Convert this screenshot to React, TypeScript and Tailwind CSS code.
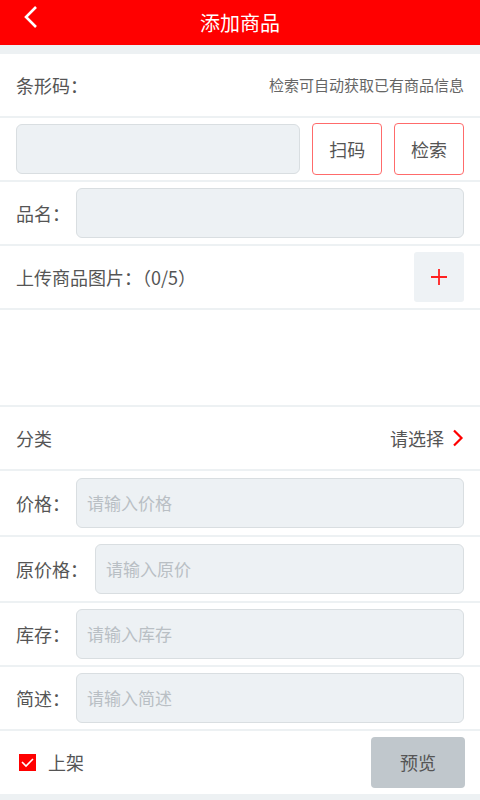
import React from 'react'

const font = { fontFamily: '"Noto Sans CJK SC", "Noto Sans", sans-serif' }

const Field = ({ label, placeholder, labelW = 'w-[60px]', h = 'h-[64px]' }: { label: string; placeholder?: string; labelW?: string; h?: string }) => (
  <div className={`flex items-center ${h} px-4 border-b-2 border-[#edf1f3]`}>
    <span className={`${labelW} shrink-0 text-[18px] text-[#555]`}>{label}</span>
    <div className="flex-1 h-[50px] rounded-[6px] bg-[#edf1f4] border border-[#d9dee1] flex items-center px-[10px] text-[17px] text-[#b9bfc4]">
      {placeholder}
    </div>
  </div>
)

const App = () => {
  return (
    <div style={font} className="w-[480px] h-[800px] bg-[#edf1f3] overflow-hidden">
      <div className="relative h-[45px] bg-[#ff0000] flex items-center justify-center">
        <svg className="absolute left-[22px] top-[5px]" width="18" height="24" viewBox="0 0 18 24">
          <path d="M14 2 L4 12 L14 22" stroke="#fff" strokeWidth="2.6" fill="none" />
        </svg>
        <span className="text-white text-[20px]">添加商品</span>
      </div>
      <div className="h-[9px]" />
      <div className="bg-white">
        <div className="flex items-center justify-between h-[64px] px-4 border-b-2 border-[#edf1f3]">
          <span className="text-[18px] text-[#555]">条形码：</span>
          <span className="text-[15px] text-[#666]">检索可自动获取已有商品信息</span>
        </div>
        <div className="flex items-center h-[64px] px-4 gap-3 border-b-2 border-[#edf1f3]">
          <div className="w-[285px] h-[50px] rounded-[6px] bg-[#edf1f4] border border-[#d9dee1]" />
          <button className="w-[70px] h-[52px] rounded-[4px] border border-[#ff6b6b] bg-white text-[18px] text-[#555]">扫码</button>
          <button className="w-[70px] h-[52px] rounded-[4px] border border-[#ff6b6b] bg-white text-[18px] text-[#555]">检索</button>
        </div>
        <Field label="品名：" />
        <div className="flex items-center justify-between h-[64px] px-4 border-b-2 border-[#edf1f3]">
          <span className="text-[18px] text-[#555]">上传商品图片：（0/5）</span>
          <div className="w-[50px] h-[50px] rounded-[3px] bg-[#eef2f5] flex items-center justify-center">
            <svg width="16" height="16" viewBox="0 0 16 16">
              <path d="M8 0 V16 M0 8 H16" stroke="#ff2020" strokeWidth="1.8" />
            </svg>
          </div>
        </div>
        <div className="h-[97px] border-b-2 border-[#edf1f3]" />
        <div className="flex items-center justify-between h-[64px] px-4 border-b-2 border-[#edf1f3]">
          <span className="text-[18px] text-[#555]">分类</span>
          <div className="flex items-center gap-[8px]">
            <span className="text-[18px] text-[#555]">请选择</span>
            <svg width="12" height="18" viewBox="0 0 12 18">
              <path d="M2 1.5 L9.5 9 L2 16.5" stroke="#ff0000" strokeWidth="2.2" fill="none" />
            </svg>
          </div>
        </div>
        <Field label="价格：" placeholder="请输入价格" h="h-[66px]" />
        <Field label="原价格：" placeholder="请输入原价" labelW="w-[79px]" h="h-[66px]" />
        <Field label="库存：" placeholder="请输入库存" />
        <Field label="简述：" placeholder="请输入简述" />
        <div className="flex items-center justify-between h-[65px] pl-[19px] pr-[15px] border-b-2 border-[#edf1f3]">
          <div className="flex items-center gap-[12px]">
            <div className="w-[17px] h-[17px] bg-[#ff0000] flex items-center justify-center">
              <svg width="13" height="10" viewBox="0 0 13 10">
                <path d="M1 4 L5 8 L12 1" stroke="#fff" strokeWidth="1.6" fill="none" />
              </svg>
            </div>
            <span className="text-[18px] text-[#555]">上架</span>
          </div>
          <button className="w-[94px] h-[51px] rounded-[4px] bg-[#c0c7cc] text-[18px] text-[#555]">预览</button>
        </div>
      </div>
    </div>
  )
}

export default App
